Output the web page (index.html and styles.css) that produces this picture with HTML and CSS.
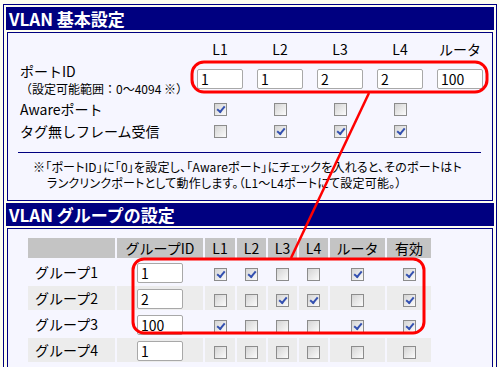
FILE: index.html
```html
<!DOCTYPE html>
<html lang="ja">
<head>
  <meta charset="UTF-8" />
  <title>VLAN設定</title>
  <meta name="viewport" content="width=device-width, initial-scale=1" />
  <link rel="stylesheet" href="styles.css">
</head>
<body>

  <div class="frame">
    <div class="bar">VLAN 基本設定</div>
    <div class="panel">
      <div class="ports">
        <div></div>
        <div>L1</div>
        <div>L2</div>
        <div>L3</div>
        <div>L4</div>
        <div>ルータ</div>

        <div class="label">ポートID<small>（設定可能範囲：0～4094 ※）</small></div>
        <input type="text" value="1" />
        <input type="text" value="1" />
        <input type="text" value="2" />
        <input type="text" value="2" />
        <input type="text" value="100" />

        <div class="label">Awareポート</div>
        <input type="checkbox" checked />
        <input type="checkbox" />
        <input type="checkbox" />
        <input type="checkbox" />
        <div></div>

        <div class="label">タグ無しフレーム受信</div>
        <input type="checkbox" />
        <input type="checkbox" checked />
        <input type="checkbox" checked />
        <input type="checkbox" checked />
        <div></div>
      </div>

      <hr>

      <p class="note">※「ポートID」に「0」を設定し、「Awareポート」にチェックを入れると、そのポートはト<br>ランクリンクポートとして動作します。（L1～L4ポートにて設定可能。）</p>
    </div>

    <div class="bar">VLAN グループの設定</div>
    <div class="panel">
      <table class="groups">
        <colgroup>
          <col class="c-name"><col class="c-id"><col class="c-l1"><col class="c-l"><col class="c-l"><col class="c-l"><col class="c-router"><col class="c-on">
        </colgroup>
        <tr>
          <th></th><th>グループID</th><th>L1</th><th>L2</th><th>L3</th><th>L4</th><th>ルータ</th><th>有効</th>
        </tr>
        <tr>
          <td class="name">グループ1</td>
          <td><input type="text" value="1" /></td>
          <td><input type="checkbox" checked /></td>
          <td><input type="checkbox" checked /></td>
          <td><input type="checkbox" /></td>
          <td><input type="checkbox" /></td>
          <td><input type="checkbox" checked /></td>
          <td><input type="checkbox" checked /></td>
        </tr>
        <tr class="alt">
          <td class="name">グループ2</td>
          <td><input type="text" value="2" /></td>
          <td><input type="checkbox" /></td>
          <td><input type="checkbox" /></td>
          <td><input type="checkbox" checked /></td>
          <td><input type="checkbox" checked /></td>
          <td><input type="checkbox" /></td>
          <td><input type="checkbox" checked /></td>
        </tr>
        <tr>
          <td class="name">グループ3</td>
          <td><input type="text" value="100" /></td>
          <td><input type="checkbox" checked /></td>
          <td><input type="checkbox" /></td>
          <td><input type="checkbox" /></td>
          <td><input type="checkbox" /></td>
          <td><input type="checkbox" checked /></td>
          <td><input type="checkbox" checked /></td>
        </tr>
        <tr class="alt">
          <td class="name">グループ4</td>
          <td><input type="text" value="1" /></td>
          <td><input type="checkbox" /></td>
          <td><input type="checkbox" /></td>
          <td><input type="checkbox" /></td>
          <td><input type="checkbox" /></td>
          <td><input type="checkbox" /></td>
          <td><input type="checkbox" /></td>
        </tr>
      </table>
    </div>
  </div>

  <!-- red annotation drawn over the form -->
  <svg class="marks" width="499" height="367" viewBox="0 0 499 367">
    <rect x="192" y="62" width="295" height="30" rx="12" />
    <rect x="133" y="259" width="291" height="74" rx="11" />
    <line x1="369" y1="93" x2="291" y2="258" />
  </svg>

</body>
</html>
```

FILE: styles.css
```css
html, body { height: 100%; overflow: hidden; }
body {
  margin: 0;
  background-color: #fffff0;
  font-family: "Noto Sans CJK JP", sans-serif;
  font-size: 14px;
  color: #000;
}
.frame {
  width: 494px;
  margin: 4px 0 0 3px;
  padding: 2px;
  border: 1px solid #000080;
  box-sizing: border-box;
}
.bar {
  height: 23px;
  line-height: 23px;
  padding-left: 3px;
  background-color: #000080;
  color: white;
  font-size: 17px;
  font-weight: bold;
}
.panel {
  margin: 2px 1px;
  border: 1px solid #000080;
  background-color: #f6f6ff;
}

/* port settings */
.ports {
  display: grid;
  grid-template-columns: 170px repeat(5, 60px);
  grid-template-rows: 20px 39px 22px 22px;
  align-items: center;
  justify-items: center;
  padding: 6px 0 0 12px;
  line-height: 20px;
}
.ports .label { justify-self: start; }
.label small {
  display: block;
  font-size: 12px;
  line-height: 16px;
}
.ports .label:first-of-type { line-height: 18px; }
hr {
  margin: 10px 11px 0 10px;
  border: none;
  border-top: 1px solid #000080;
}
.note {
  margin: 6px 0 9px;
  padding-left: 39px;
  text-indent: -14px;
  font-size: 12px;
  line-height: 16px;
  letter-spacing: 0.2px;
  white-space: nowrap;
  font-feature-settings: "palt";
}

/* form controls */
input[type="text"] {
  width: 46px;
  height: 20px;
  box-sizing: border-box;
  margin: 0;
  padding: 0 3px;
  border: 1px solid #a8a8a8;
  border-radius: 2px;
  background: white;
  font-family: inherit;
  font-size: 14px;
}
input[type="checkbox"] {
  appearance: none;
  -webkit-appearance: none;
  position: relative;
  width: 13px;
  height: 13px;
  margin: 0;
  border: 1px solid #8c8c8c;
  background: linear-gradient(135deg, #d4d4d4, #fbfbfb);
  box-sizing: border-box;
}
input[type="checkbox"]:checked::before {
  content: "";
  position: absolute;
  left: 2px;
  top: 2px;
  width: 6px;
  height: 3px;
  border-left: 2px solid #3350b0;
  border-bottom: 2px solid #3350b0;
  transform: rotate(-50deg);
}

/* group table */
.groups {
  margin: 7px 0 40px 18px;
  border-spacing: 2px;
}
.c-name { width: 87px; }
.c-id { width: 86px; }
.c-l1 { width: 30px; }
.c-l { width: 29px; }
.c-router { width: 55px; }
.c-on { width: 44px; }
.groups th {
  height: 20px;
  padding: 0;
  background-color: #c4c4c4;
  font-weight: normal;
  line-height: 20px;
}
.groups td {
  height: 24px;
  padding: 0;
  text-align: center;
  vertical-align: middle;
}
.groups td input { vertical-align: middle; }
.groups tr.alt td { background-color: #ececec; }
.groups td.name {
  padding-left: 7px;
  text-align: left;
}

.marks {
  position: absolute;
  top: 0;
  left: 0;
  pointer-events: none;
  fill: none;
  stroke: #f00;
  stroke-width: 3;
}
.marks line { stroke-width: 2.5; }
```
